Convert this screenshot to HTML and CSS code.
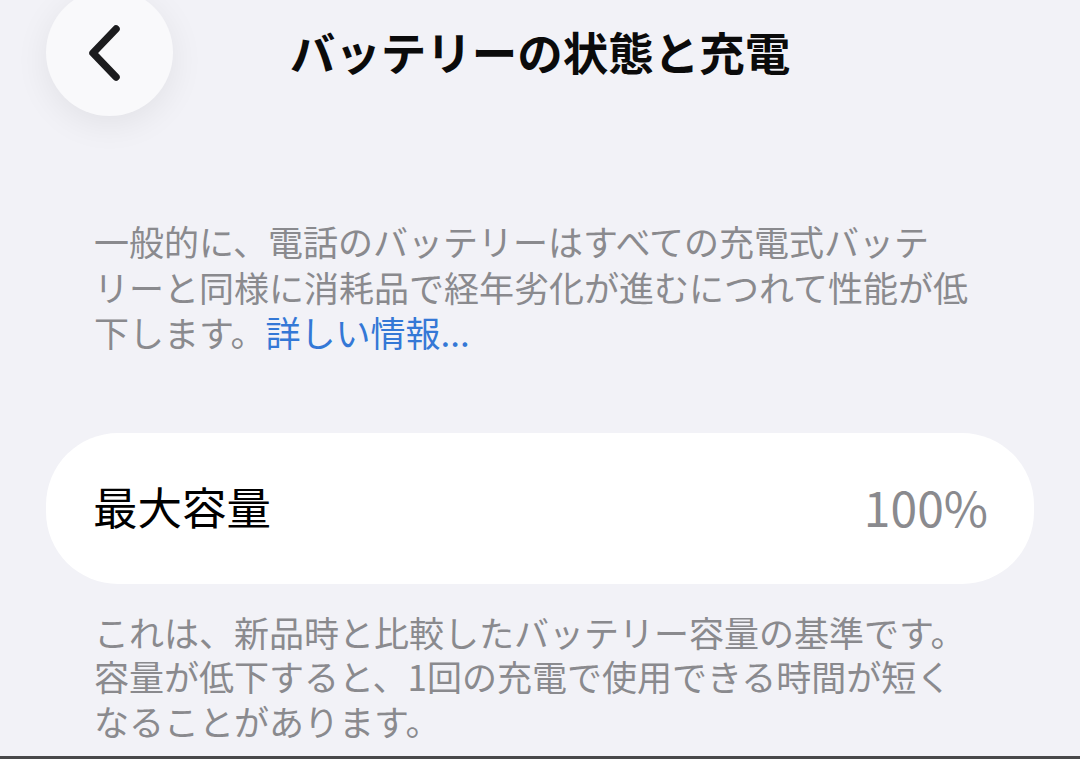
FILE: index.html
```html
<!DOCTYPE html>
<html lang="ja">
<head>
<meta charset="utf-8">
<title>バッテリーの状態と充電</title>
<link rel="stylesheet" href="styles.css">
</head>
<body>
<div class="screen">
  <header class="nav">
    <button class="back" aria-label="戻る">
      <svg viewBox="0 0 40 60" width="40" height="60" aria-hidden="true">
        <path d="M29 6 L6 30 L29 54" fill="none" stroke="#1c1c1e" stroke-width="7.5" stroke-linecap="round" stroke-linejoin="round"/>
      </svg>
    </button>
    <h1 class="title">バッテリーの状態と充電</h1>
    <div class="spacer"></div>
  </header>

  <p class="note note-top">一般的に、電話のバッテリーはすべての充電式バッテ<br>リーと同様に消耗品で経年劣化が進むにつれて性能が低<br>下します。<a class="link" href="#">詳しい情報...</a></p>

  <div class="card">
    <span class="label">最大容量</span>
    <span class="value">100%</span>
  </div>

  <p class="note note-bottom">これは、新品時と比較したバッテリー容量の基準です。<br>容量が低下すると、1回の充電で使用できる時間が短く<br>なることがあります。</p>

  <div class="edge"></div>
</div>
</body>
</html>
```

FILE: styles.css
```css
html, body {
  margin: 0;
  padding: 0;
  background: #f2f2f7;
}

body {
  font-family: "Noto Sans CJK JP", "Noto Sans", sans-serif;
  overflow: hidden;
}

.screen {
  width: 1080px;
  height: 759px;
  overflow: hidden;
  display: flex;
  flex-direction: column;
}

.nav {
  display: grid;
  grid-template-columns: 1fr auto 1fr;
  align-items: center;
  padding: 0 46px;
  margin-top: -11px;
  height: 127px;
  flex: none;
}

.back {
  width: 127px;
  height: 127px;
  border-radius: 50%;
  border: none;
  background: #f9f9fb;
  box-shadow: 0 8px 34px rgba(0, 0, 0, 0.07);
  display: flex;
  align-items: center;
  justify-content: center;
  padding: 0 6px 0 0;
  margin: 0;
}

.back svg {
  display: block;
}

.title {
  margin: 0;
  padding-bottom: 2px;
  font-size: 45.5px;
  font-weight: 700;
  color: #0b0b0b;
  line-height: 1.2;
  white-space: nowrap;
}

.note {
  margin: 0;
  padding: 0 46px 0 94px;
  font-size: 35px;
  line-height: 45.5px;
  color: #8a8a8e;
  white-space: nowrap;
}

.note-top {
  margin-top: 102px;
}

.link {
  color: #3478d6;
  text-decoration: none;
}

.card {
  box-sizing: border-box;
  margin: 78px 46px 0;
  height: 151px;
  background: #ffffff;
  border-radius: 72px;
  display: flex;
  align-items: center;
  justify-content: space-between;
  padding: 0 46px 4px 47px;
  flex: none;
}

.label {
  font-size: 44.5px;
  color: #000000;
  line-height: 1;
}

.value {
  font-size: 48px;
  color: #8a8a8e;
  line-height: 1;
}

.note-bottom {
  margin-top: 26px;
  line-height: 44.5px;
}

.edge {
  margin-top: auto;
  height: 3px;
  background: #48484a;
  flex: none;
}
```
